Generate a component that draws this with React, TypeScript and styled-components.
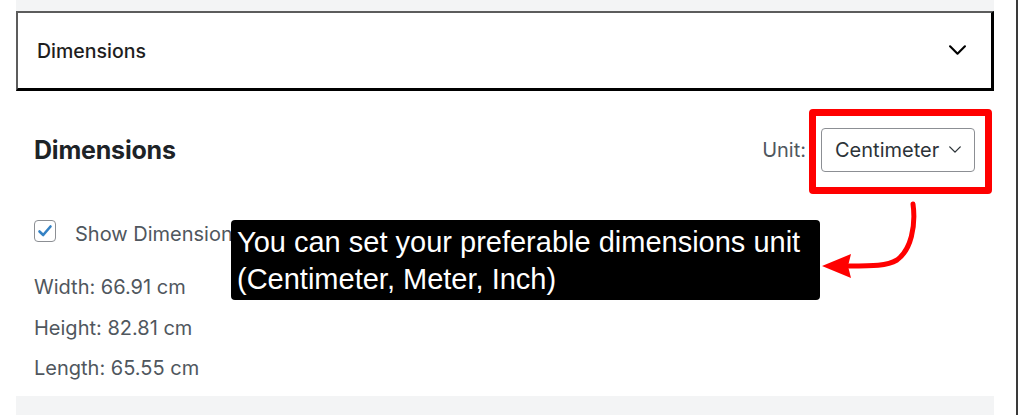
import React from 'react';
import styled, { createGlobalStyle } from 'styled-components';

const GlobalStyle = createGlobalStyle`
  html, body {
    margin: 0;
    padding: 0;
    background: #fff;
  }
  body {
    font-family: Inter, "Liberation Sans", Arial, sans-serif;
  }
`;

const Page = styled.div`
  position: relative;
  width: 1016px;
  height: 415px;
  border-right: 2px solid #3a3a3a;
  overflow: hidden;
`;

const Column = styled.div`
  margin-left: 16px;
  width: 978px;
  display: flex;
  flex-direction: column;
`;

const GreyStrip = styled.div<{ $height: number }>`
  height: ${(p) => p.$height}px;
  background: #f3f4f5;
`;

const AccordionHeader = styled.div`
  box-sizing: border-box;
  height: 80px;
  display: flex;
  align-items: center;
  justify-content: space-between;
  padding: 0 25px 0 19px;
  border: 2px solid;
  border-color: #5c5c5c #000 #000 #5c5c5c;
  border-right-width: 3px;
  border-bottom-width: 3px;
`;

const AccordionTitle = styled.span`
  font-size: 19.5px;
  font-weight: 500;
  color: #1e1e1e;
`;

const Section = styled.div`
  padding: 37px 19px 0 18px;
  display: flex;
  flex-direction: column;
`;

const HeadingRow = styled.div`
  display: flex;
  align-items: center;
  justify-content: space-between;
  height: 44px;
`;

const Heading = styled.h2`
  margin: 0;
  font-size: 25px;
  font-weight: 700;
  color: #1d2327;
  letter-spacing: -0.2px;
`;

const UnitGroup = styled.div`
  display: flex;
  align-items: center;
  gap: 15px;
`;

const Label = styled.span<{ $nudge?: number }>`
  font-size: 20px;
  color: #50575e;
  white-space: nowrap;
  padding-top: ${(p) => p.$nudge ?? 0}px;
`;

const SelectBox = styled.div`
  box-sizing: border-box;
  width: 154px;
  height: 44px;
  border: 1px solid #8c8f94;
  border-radius: 4px;
  display: flex;
  align-items: center;
  gap: 10px;
  padding: 0 0 0 13px;
  font-size: 20px;
  color: #2c3338;
`;

const CheckRow = styled.label`
  display: flex;
  align-items: center;
  gap: 19px;
  margin-top: 48px;
  height: 22px;
`;

const Checkbox = styled.span`
  box-sizing: border-box;
  flex: none;
  width: 22px;
  height: 22px;
  border: 1px solid #8c8f94;
  border-radius: 4px;
  display: flex;
  align-items: center;
  justify-content: center;
`;

const InfoList = styled.div`
  margin-top: 25px;
  display: flex;
  flex-direction: column;
`;

const InfoLine = styled.div`
  height: 40.5px;
  display: flex;
  align-items: center;
  font-size: 20px;
  color: #50575e;
`;

const BottomStrip = styled(GreyStrip)`
  margin-top: 7px;
`;

const Highlight = styled.div`
  position: absolute;
  left: 809px;
  top: 109px;
  width: 183px;
  height: 85px;
  box-sizing: border-box;
  border: 7px solid #ff0000;
  border-radius: 4px;
`;

const Tooltip = styled.div`
  position: absolute;
  left: 231px;
  top: 220px;
  width: 589px;
  height: 80px;
  box-sizing: border-box;
  background: #000;
  border-radius: 4px;
  padding: 4px 0 0 6px;
  color: #fff;
  font-family: "Liberation Sans", Arial, sans-serif;
  font-size: 29px;
  line-height: 37px;
  white-space: nowrap;
`;

const Arrow = styled.svg`
  position: absolute;
  left: 815px;
  top: 196px;
`;

const Chevron = ({ size = 16, stroke = '#000', width = 2 }: { size?: number; stroke?: string; width?: number }) => (
  <svg width={size} height={size * 0.6} viewBox="0 0 16 9.6" fill="none">
    <path d="M1 1.2 L8 8.2 L15 1.2" stroke={stroke} strokeWidth={width} strokeLinecap="round" strokeLinejoin="round" />
  </svg>
);

const dims = [
  ['Width', '66.91'],
  ['Height', '82.81'],
  ['Length', '65.55'],
];

export default function App() {
  return (
    <>
      <GlobalStyle />
      <Page>
        <Column>
          <GreyStrip $height={11} />
          <AccordionHeader>
            <AccordionTitle>Dimensions</AccordionTitle>
            <Chevron size={17} width={2} />
          </AccordionHeader>
          <Section>
            <HeadingRow>
              <Heading>Dimensions</Heading>
              <UnitGroup>
                <Label>Unit:</Label>
                <SelectBox>
                  <span>Centimeter</span>
                  <Chevron size={12} stroke="#2c3338" width={1.8} />
                </SelectBox>
              </UnitGroup>
            </HeadingRow>
            <CheckRow>
              <Checkbox>
                <svg width="16" height="16" viewBox="0 0 16 16" fill="none">
                  <path d="M2.5 8.5 L6.2 12 L13.5 3.5" stroke="#3582c4" strokeWidth="2.6" strokeLinecap="round" strokeLinejoin="round" />
                </svg>
              </Checkbox>
              <Label $nudge={5}>Show Dimensions</Label>
            </CheckRow>
            <InfoList>
              {dims.map(([name, value]) => (
                <InfoLine key={name}>
                  {name}: {value} cm
                </InfoLine>
              ))}
            </InfoList>
          </Section>
          <BottomStrip $height={30} />
        </Column>

        <Highlight />
        <Tooltip>
          You can set your preferable dimensions unit
          <br />
          (Centimeter, Meter, Inch)
        </Tooltip>
        <Arrow width="110" height="90" viewBox="0 0 110 90" fill="none">
          <path
            d="M98 8 C101 30 96 54 82 64 C72 70 58 70 34 70"
            stroke="#ff0000"
            strokeWidth="5"
            strokeLinecap="round"
          />
          <path d="M7 70 L36 58 L33 70 L36 82 Z" fill="#ff0000" />
        </Arrow>
      </Page>
    </>
  );
}
